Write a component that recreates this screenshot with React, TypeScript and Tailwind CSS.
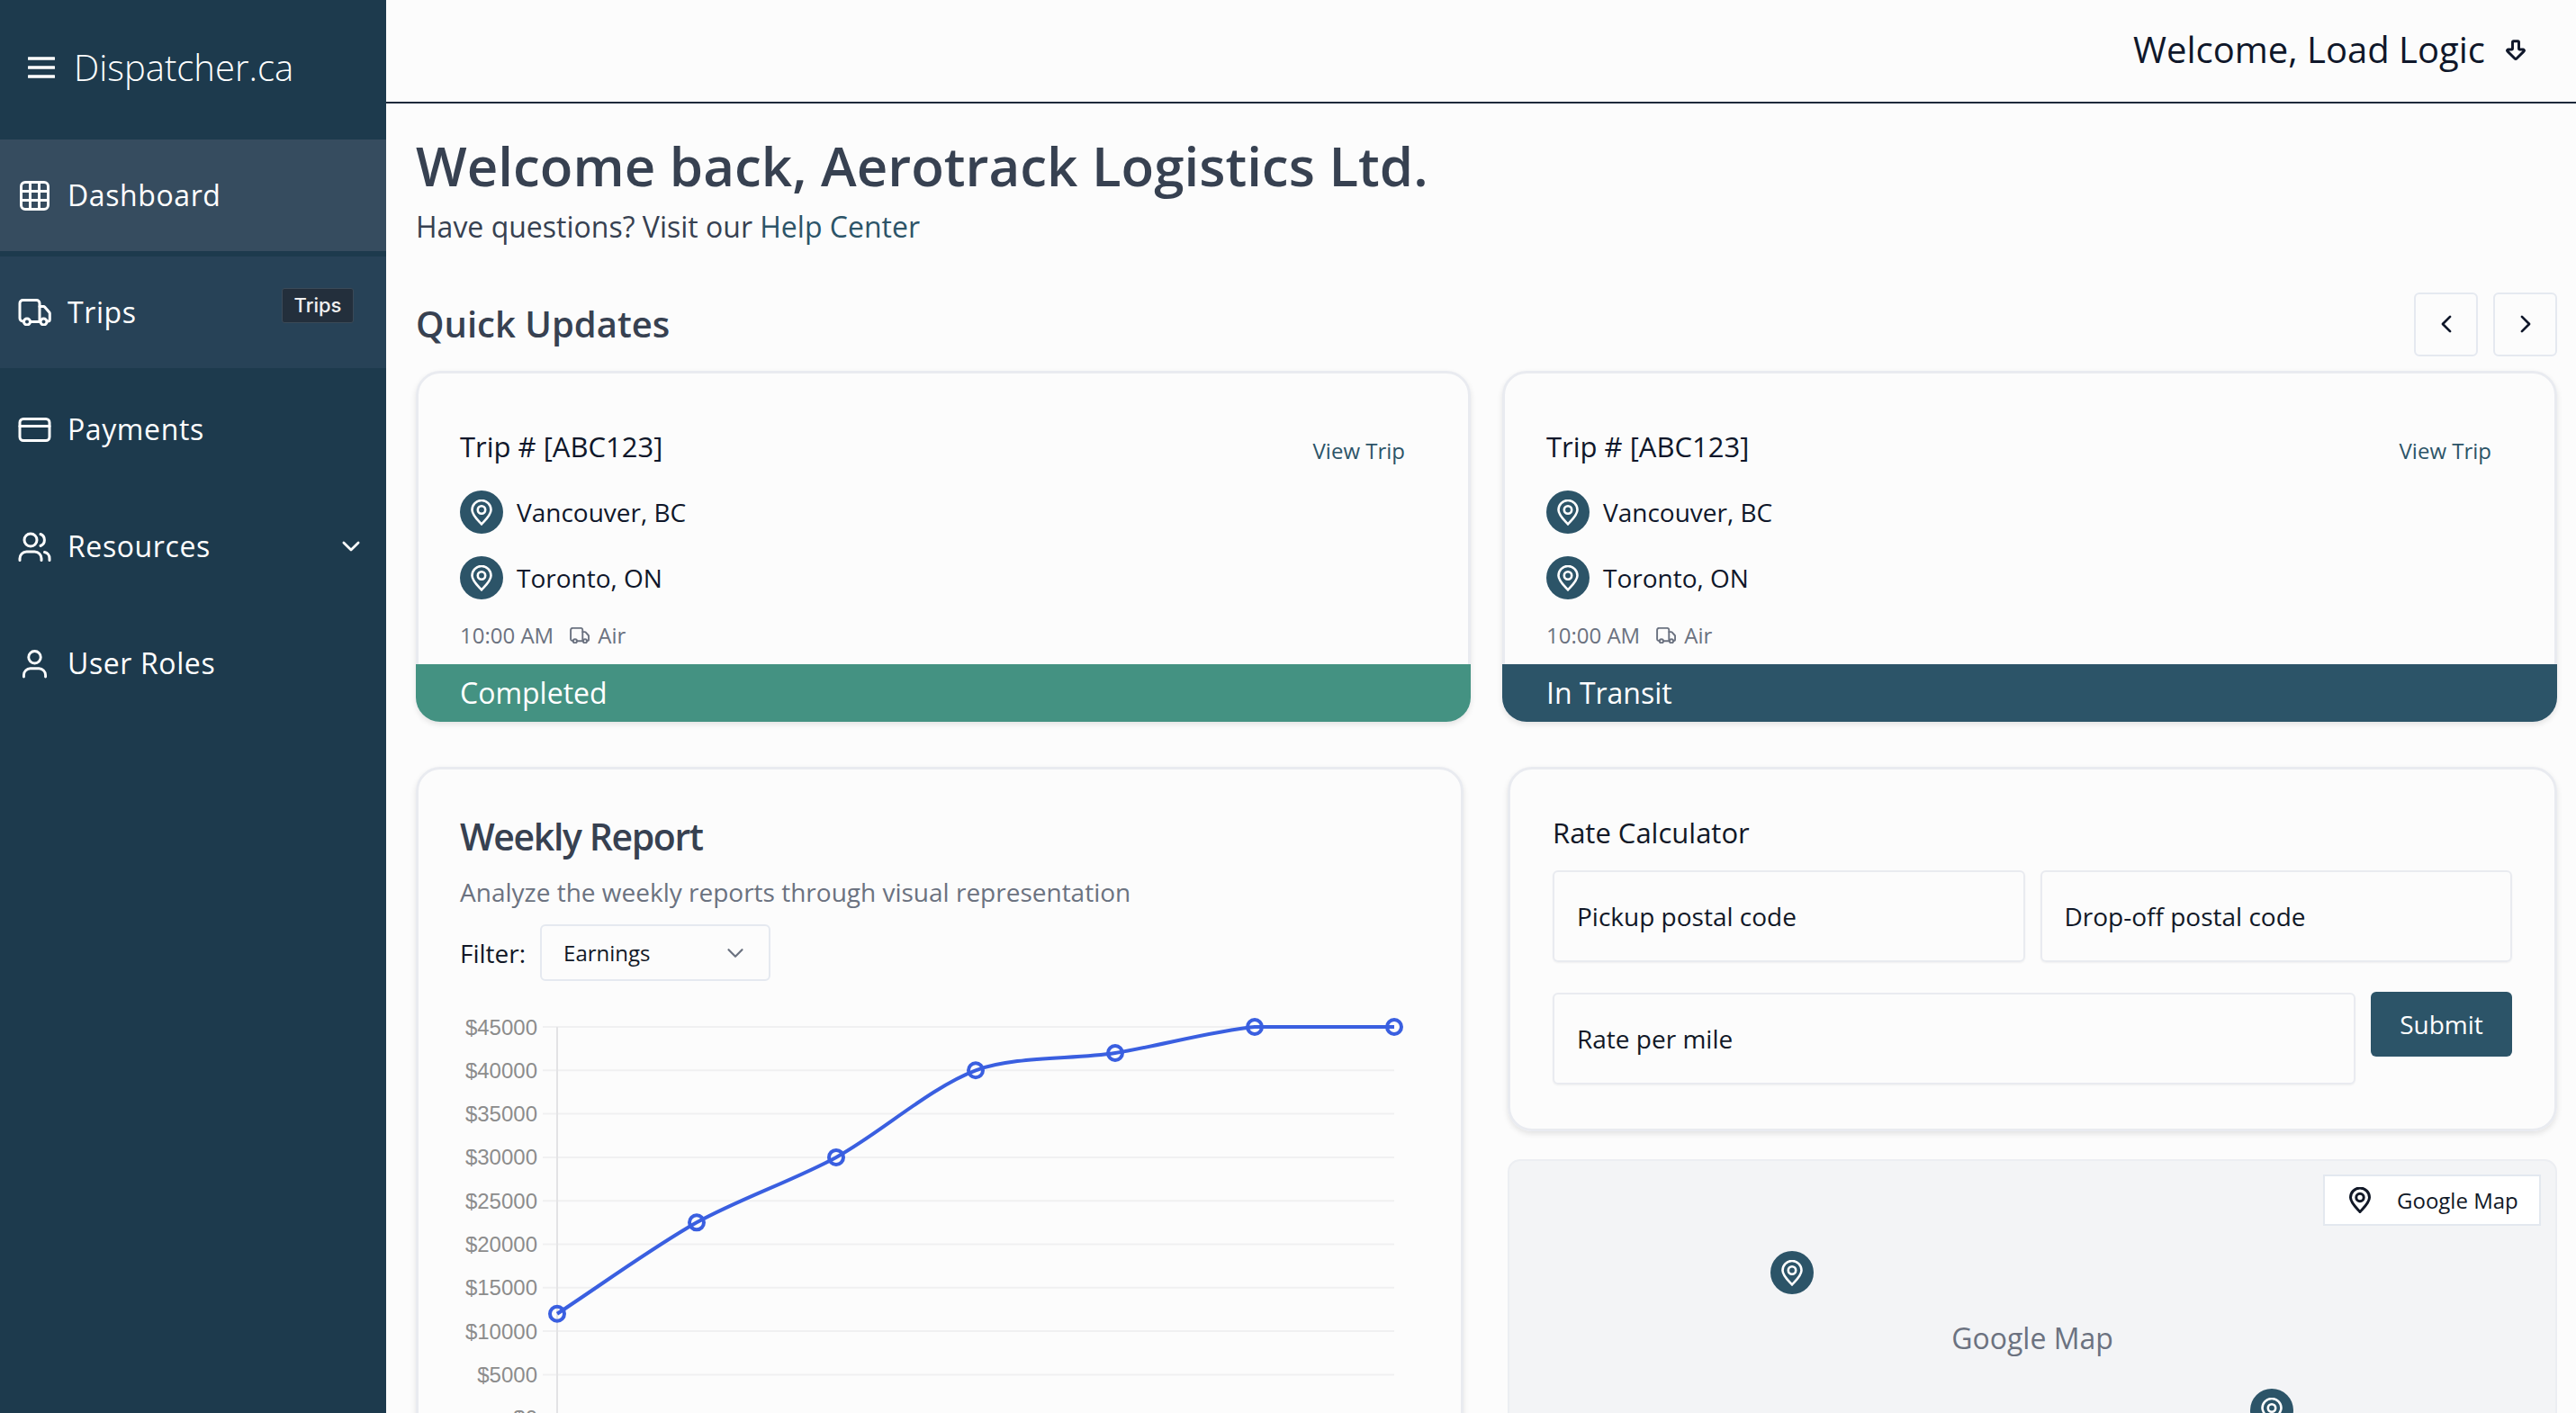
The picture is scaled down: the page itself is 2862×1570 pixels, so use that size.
import React from 'react';
import { HiOutlineChevronDown, HiOutlineChevronLeft, HiOutlineChevronRight } from 'react-icons/hi2';
import { ArrowBigDown } from 'lucide-react';

type IconProps = { className?: string; strokeWidth?: number };

const Burger = ({ className }: IconProps) => (
    <svg viewBox="0 0 30 24" fill="none" stroke="currentColor" strokeWidth="3.4" strokeLinecap="round" className={className}>
        <path d="M1 2h28M1 12h28M1 22h28" />
    </svg>
);

const GridIcon = ({ className }: IconProps) => (
    <svg viewBox="0 0 33 33" fill="none" stroke="currentColor" strokeWidth="3" className={className}>
        <rect x="1.5" y="1.5" width="30" height="30" rx="4.5" />
        <path d="M11.5 1.5v30M21.5 1.5v30M1.5 11.5h30M1.5 21.5h30" />
    </svg>
);

const TruckIcon = ({ className, strokeWidth = 3 }: IconProps) => (
    <svg viewBox="0 0 36 30" fill="none" stroke="currentColor" strokeWidth={strokeWidth} strokeLinecap="round" strokeLinejoin="round" className={className}>
        <path d="M5.5 25H5a3.5 3.5 0 0 1-3.5-3.5V5A3.5 3.5 0 0 1 5 1.500h15A3.500 3.500 0 0 1 23.500 5v20M13.500 25.500h10.500" />
        <path d="M23.500 8.500h4.300a2 2 0 0 1 1.500.700l5 5.800a2 2 0 0 1 .500 1.300v6.700a2 2 0 0 1-2 2h-.500" />
        <circle cx="9.500" cy="25.500" r="3.500" />
        <circle cx="28" cy="25.500" r="3.500" />
    </svg>
);

const CardIcon = ({ className }: IconProps) => (
    <svg viewBox="0 0 36 27" fill="none" stroke="currentColor" strokeWidth="3" strokeLinecap="round" className={className}>
        <rect x="1.500" y="1.500" width="33" height="24" rx="4" />
        <path d="M1.500 9.500h33" />
    </svg>
);

const UsersIcon = ({ className }: IconProps) => (
    <svg viewBox="0 0 36 33" fill="none" stroke="currentColor" strokeWidth="3" strokeLinecap="round" className={className}>
        <circle cx="13.500" cy="9" r="7" />
        <path d="M1.500 31.500v-2a7.500 7.500 0 0 1 7.500-7.500h9a7.500 7.500 0 0 1 7.500 7.500v2" />
        <path d="M24.500 2.500a7 7 0 0 1 0 13M29 22.500a7 7 0 0 1 5.500 7v2" />
    </svg>
);

const UserIcon = ({ className }: IconProps) => (
    <svg viewBox="0 0 28 33" fill="none" stroke="currentColor" strokeWidth="3" strokeLinecap="round" className={className}>
        <circle cx="14" cy="9" r="7" />
        <path d="M1.500 31.500v-2a7.500 7.500 0 0 1 7.500-7.500h10a7.500 7.500 0 0 1 7.500 7.500v2" />
    </svg>
);

const PinIcon = ({ className, strokeWidth = 2.6 }: IconProps) => (
    <svg viewBox="0 0 24 29" fill="none" stroke="currentColor" strokeWidth={strokeWidth} strokeLinejoin="round" className={className}>
        <path d="M12 27.500C9 24 1.500 17.500 1.500 11.500a10.500 10.500 0 0 1 21 0C22.500 17.500 15 24 12 27.500z" />
        <circle cx="12" cy="11.500" r="4.200" />
    </svg>
);

const NAV = [
    { label: 'Dashboard', icon: <GridIcon className="ml-[2px] mr-[2px] h-[33px] w-[33px]" />, bg: 'bg-[#364c5f]' },
    { label: 'Trips', icon: <TruckIcon className="h-[30px] w-[37px]" />, bg: 'bg-[#274257]' },
    { label: 'Payments', icon: <CardIcon className="h-[27px] w-[37px]" />, bg: '' },
    { label: 'Resources', icon: <UsersIcon className="h-[33px] w-[37px]" />, bg: '' },
    { label: 'User Roles', icon: <UserIcon className="mx-[5px] h-[33px] w-[27px]" />, bg: '' },
];

const Sidebar = () => (
    <aside className="w-[429px] shrink-0 bg-[#1d3a4d] text-white">
        <div className="flex h-[155px] items-center gap-[21px] pl-[31px] pb-[6px]">
            <Burger className="h-[24px] w-[30px]" />
            <span className="text-[40px] font-light">Dispatcher.ca</span>
        </div>
        <nav className="flex flex-col gap-[6px]">
            {NAV.map(({ label, icon, bg }) => (
                <div key={label} className={`relative flex h-[124px] items-center gap-[18px] pl-[20px] pr-[26px] ${bg}`}>
                    {icon}
                    <span className="text-[32px] tracking-[0.6px]">{label}</span>
                    {label === 'Resources' && <HiOutlineChevronDown className="ml-auto size-[26px]" strokeWidth={2.5} />}
                    {label === 'Trips' && (
                        <span className="absolute left-[313px] top-[35px] flex h-[39px] w-[80px] items-center justify-center rounded-[3px] border border-[#3b4a58] bg-[#232f3c] font-['Inter'] text-[22px] font-medium text-[#f0f0f0]">
                            Trips
                        </span>
                    )}
                </div>
            ))}
        </nav>
    </aside>
);

const PinBadge = () => (
    <span className="flex size-[48px] shrink-0 items-center justify-center rounded-full bg-[#2c5468] text-white">
        <PinIcon className="h-[29px] w-[24px]" />
    </span>
);

const TripCard = ({ status, statusBg }: { status: string; statusBg: string }) => (
    <div className="rounded-[27px] border-[3px] border-[#e9ebf0] shadow-[0_3px_6px_rgba(0,0,0,0.1)]">
        <div className="px-[46px] pt-[58px]">
            <div className="flex items-start justify-between pr-[24px]">
                <h3 className="text-[31px] leading-[46px] text-[#0f172a]">Trip # [ABC123]</h3>
                <a className="mt-[10px] text-[24px] leading-[36px] font-medium text-[#2c5468]">View Trip</a>
            </div>
            <div className="mt-[26px] flex flex-col gap-[25px]">
                <div className="flex items-center gap-[15px] text-[28px] text-[#0f172a]">
                    <PinBadge />
                    Vancouver, BC
                </div>
                <div className="flex items-center gap-[15px] text-[28px] text-[#0f172a]">
                    <PinBadge />
                    Toronto, ON
                </div>
            </div>
            <div className="mt-[21px] flex h-[37px] items-center text-[24px] text-[#6b7280]">
                10:00 AM
                <TruckIcon className="ml-[18px] mr-[9px] h-[18px] w-[22px]" strokeWidth={3.2} />
                Air
            </div>
        </div>
        <div className={`-mx-[3px] -mb-[3px] mt-[14px] flex h-[64px] items-center rounded-b-[27px] px-[49px] text-[32px] text-white ${statusBg}`}>{status}</div>
    </div>
);

const VALUES = [12000, 22500, 30000, 40000, 42000, 45000, 45000];
const CHART_TOP = 26;
const STEP = 48.3;
const X0 = 108;
const DX = 155;
const yOf = (v: number) => CHART_TOP + ((45000 - v) / 5000) * STEP;

// bezier through the points, same idea as the chart library's tension option
const buildLine = () => {
    const pts = VALUES.map((v, i) => ({ x: X0 + i * DX, y: yOf(v) }));
    const t = 0.3;
    const ctrl = pts.map((p, i) => {
        const prev = pts[i - 1] || p;
        const next = pts[i + 1] || p;
        const d01 = Math.hypot(p.x - prev.x, p.y - prev.y);
        const d12 = Math.hypot(next.x - p.x, next.y - p.y);
        const s01 = d01 / (d01 + d12 || 1);
        const s12 = d12 / (d01 + d12 || 1);
        return {
            inX: p.x - t * s01 * (next.x - prev.x),
            inY: Math.max(CHART_TOP, p.y - t * s01 * (next.y - prev.y)),
            outX: p.x + t * s12 * (next.x - prev.x),
            outY: Math.max(CHART_TOP, p.y + t * s12 * (next.y - prev.y)),
        };
    });
    let d = `M${pts[0].x} ${pts[0].y}`;
    for (let i = 1; i < pts.length; i++) {
        d += ` C${ctrl[i - 1].outX} ${ctrl[i - 1].outY} ${ctrl[i].inX} ${ctrl[i].inY} ${pts[i].x} ${pts[i].y}`;
    }
    return { d, pts };
};

const Chart = () => {
    const { d, pts } = buildLine();
    const ticks = [45000, 40000, 35000, 30000, 25000, 20000, 15000, 10000, 5000, 0];
    return (
        <svg width="1070" height="480" className="mt-[25px] block font-['Liberation_Sans']">
            {ticks.map(v => (
                <g key={v}>
                    <line x1={92} x2={1038} y1={yOf(v)} y2={yOf(v)} stroke="#f0f0f1" strokeWidth="2" />
                    <text x={86} y={yOf(v) + 8.5} textAnchor="end" fontSize="24" fill="#8c8c8c">${v}</text>
                </g>
            ))}
            <line x1={X0} x2={X0} y1={CHART_TOP} y2={480} stroke="#e3e3e5" strokeWidth="2" />
            <path d={d} fill="none" stroke="#3a5fe0" strokeWidth="4" />
            {pts.map(p => (
                <circle key={p.x} cx={p.x} cy={p.y} r="8" fill="none" stroke="#3a5fe0" strokeWidth="4" />
            ))}
        </svg>
    );
};

const WeeklyReport = () => (
    <div className="h-[900px] rounded-[27px] border-[3px] border-[#e9ebf0] px-[46px] pt-[47px] shadow-[0_3px_6px_rgba(0,0,0,0.1)]">
        <h2 className="text-[41px] leading-[54px] font-semibold tracking-[-1.4px] text-[#374151]">Weekly Report</h2>
        <p className="mt-[15px] text-[28px] leading-[40px] text-[#6b7280]">Analyze the weekly reports through visual representation</p>
        <div className="mt-[16px] flex items-center gap-[16px]">
            <span className="text-[28px] text-[#111827]">Filter:</span>
            <div className="flex h-[63px] w-[256px] items-center justify-between rounded-[6px] border-2 border-[#e5e9f0] pl-[24px] pr-[25px] text-[24px] text-[#111827]">
                Earnings
                <HiOutlineChevronDown className="size-[24px] text-[#6b7280]" strokeWidth={2.2} />
            </div>
        </div>
        <Chart />
    </div>
);

const Field = ({ label, className }: { label: string; className: string }) => (
    <div className={`flex h-[102px] items-center rounded-[6px] border-2 border-[#e9ebf0] pl-[25px] text-[28px] text-[#111827] shadow-[0_1px_2px_rgba(0,0,0,0.05)] ${className}`}>
        {label}
    </div>
);

const RateCalculator = () => (
    <div className="rounded-[27px] border-[3px] border-[#e9ebf0] px-[47px] pb-[49px] pt-[48px] shadow-[0_3px_6px_rgba(0,0,0,0.1)]">
        <h3 className="text-[31px] leading-[44px] font-medium text-[#111827]">Rate Calculator</h3>
        <div className="mt-[20px] flex gap-[17px]">
            <Field label="Pickup postal code" className="flex-1" />
            <Field label="Drop-off postal code" className="flex-1" />
        </div>
        <div className="mt-[34px] flex items-start gap-[17px]">
            <Field label="Rate per mile" className="flex-1" />
            <button className="-mt-[1px] flex h-[72px] w-[157px] items-center justify-center rounded-[6px] bg-[#2c5468] text-[28px] font-medium text-white">Submit</button>
        </div>
    </div>
);

const MapPanel = () => (
    <div className="relative mt-[31px] flex h-[398px] items-center justify-center rounded-t-[14px] border-2 border-[#eceef2] bg-[#f3f4f6] text-[32px] text-[#6b7280]">
        Google Map
        <div className="absolute right-[16px] top-[15px] flex h-[57px] w-[242px] items-center gap-[29px] border-2 border-[#e3e8ef] bg-white pl-[27px] text-[24px] font-medium text-[#111827]">
            <PinIcon className="h-[29px] w-[24px]" strokeWidth={3} />
            Google Map
        </div>
        <div className="absolute left-[290px] top-[100px]"><PinBadge /></div>
        <div className="absolute left-[823px] top-[253px]"><PinBadge /></div>
    </div>
);

export default function App() {
    return (
        <div className="flex h-[1570px] w-[2862px] overflow-hidden bg-[#fcfcfc] font-['Open_Sans',sans-serif]">
            <Sidebar />
            <main className="min-w-0 flex-1">
                <header className="flex h-[115px] items-center justify-end border-b-2 border-[#1e293b] pb-[3px] pr-[53px] text-[40px] text-[#0f172a]">
                    Welcome, Load Logic
                    <ArrowBigDown className="ml-[20px] size-[28px]" strokeWidth={2.5} />
                </header>
                <div className="pl-[33px] pr-[21px]">
                    <h1 className="mt-[31px] text-[60px] leading-[76px] font-semibold text-[#374151]">Welcome back, Aerotrack Logistics Ltd.</h1>
                    <p className="mt-[7px] text-[32px] leading-[46px] text-[#374151]">
                        Have questions? Visit our <a className="text-[#2c5468]">Help Center</a>
                    </p>
                    <div className="mt-[49px] flex h-[72px] items-center justify-between">
                        <h2 className="text-[40px] font-semibold text-[#374151]">Quick Updates</h2>
                        <div className="flex gap-[17px]">
                            <button className="flex size-[71px] items-center justify-center rounded-[6px] border-2 border-[#e5e9f0] text-[#0f172a]"><HiOutlineChevronLeft className="size-[26px]" strokeWidth={2.5} /></button>
                            <button className="flex size-[71px] items-center justify-center rounded-[6px] border-2 border-[#e5e9f0] text-[#0f172a]"><HiOutlineChevronRight className="size-[26px]" strokeWidth={2.5} /></button>
                        </div>
                    </div>
                    <div className="mt-[16px] grid grid-cols-2 gap-[35px]">
                        <TripCard status="Completed" statusBg="bg-[#449282]" />
                        <TripCard status="In Transit" statusBg="bg-[#2c5468]" />
                    </div>
                    <div className="mt-[50px] flex items-start gap-[49px]">
                        <div className="w-[1164px]"><WeeklyReport /></div>
                        <div className="flex-1">
                            <RateCalculator />
                            <MapPanel />
                        </div>
                    </div>
                </div>
            </main>
        </div>
    );
}
